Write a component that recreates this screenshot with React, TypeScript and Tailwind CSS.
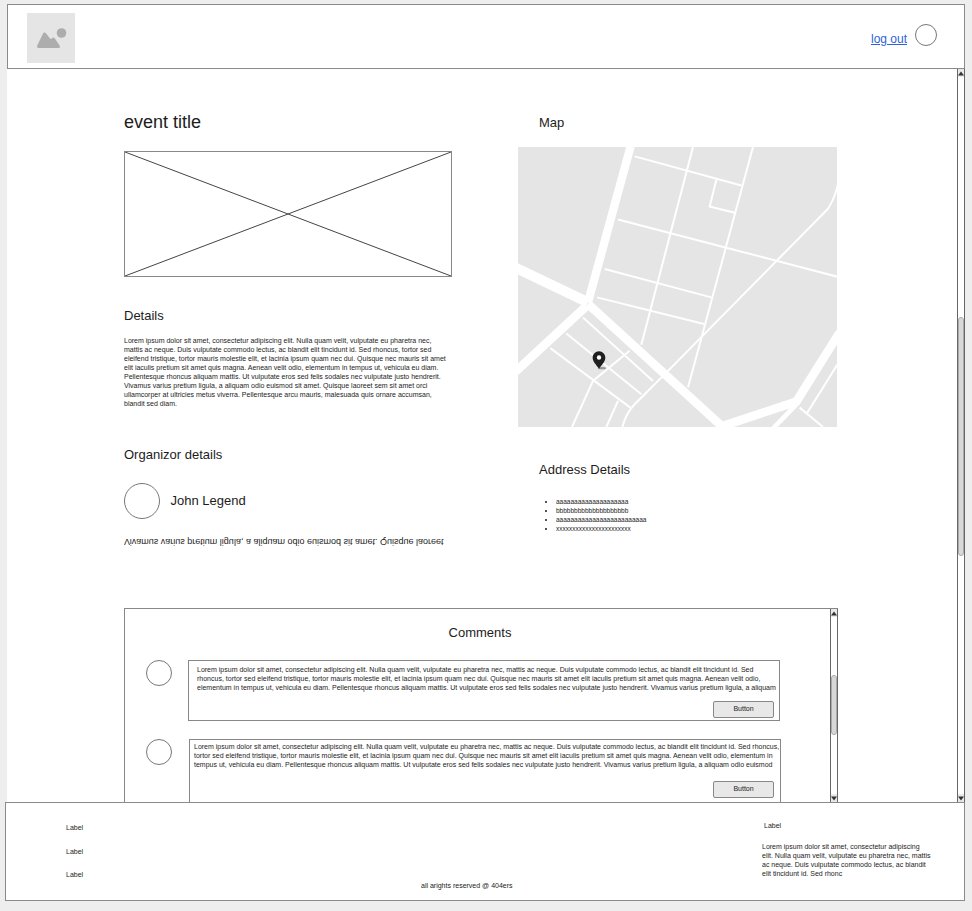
const lorem =
  "Lorem ipsum dolor sit amet, consectetur adipiscing elit. Nulla quam velit, vulputate eu pharetra nec, mattis ac neque. Duis vulputate commodo lectus, ac blandit elit tincidunt id. Sed rhoncus, tortor sed eleifend tristique, tortor mauris molestie elit, et lacinia ipsum quam nec dui. Quisque nec mauris sit amet elit iaculis pretium sit amet quis magna. Aenean velit odio, elementum in tempus ut, vehicula eu diam. Pellentesque rhoncus aliquam mattis. Ut vulputate eros sed felis sodales nec vulputate justo hendrerit. Vivamus varius pretium ligula, a aliquam odio euismod sit amet. Quisque laoreet sem sit amet orci ullamcorper at ultricies metus viverra. Pellentesque arcu mauris, malesuada quis ornare accumsan, blandit sed diam.";

const commentOne = lorem.slice(0, lorem.indexOf(" odio euismod"));
const commentTwo = lorem.slice(0, lorem.indexOf(" sit amet. Quisque laoreet"));

const thickRoads = [
  { d: "M365 10L235 485", w: 25 },
  { d: "M15 380L235 485", w: 30 },
  { d: "M235 490L650 868", w: 26 },
  { d: "M15 695L228 498", w: 26 },
  { d: "M640 855L860 782L990 575", w: 26 },
];

const thinRoads = [
  "M375 48L695 135",
  "M550 20L395 612",
  "M730 20L535 740",
  "M620 118L600 198L675 217",
  "M325 237L990 410",
  "M285 385L605 470",
  "M262 470L583 550",
  "M985 130Q975 175 955 205L475 690Q400 765 375 790Q350 815 338 858",
  "M220 530L430 720",
  "M170 578L395 760",
  "M122 622L362 800",
  "M360 630L250 720L187 858",
  "M325 780L290 858",
  "M990 660L893 815",
  "M870 800L940 858",
];

function ScrollArrow({ down }: { down?: boolean }) {
  return (
    <div className="h-2 w-full shrink-0 bg-[#e9e9e9] flex items-center justify-center">
      <svg width="6" height="5" viewBox="0 0 6 5">
        <path d={down ? "M0 0.5H6L3 4.5Z" : "M0 4.5H6L3 0.5Z"} fill="#333" />
      </svg>
    </div>
  );
}

function Scrollbar({ thumbTop, thumbHeight }: { thumbTop: string; thumbHeight: string }) {
  return (
    <div className="w-[6px] shrink-0 box-content border-x border-[#666] bg-white flex flex-col justify-between">
      <ScrollArrow />
      <div className={`${thumbTop} ${thumbHeight} mb-auto w-full rounded-[3px] bg-[#d8d8d8] border border-[#aaa]`} />
      <ScrollArrow down />
    </div>
  );
}

function Circle({ className }: { className: string }) {
  return <div className={`${className} shrink-0 rounded-full border border-[#777] bg-white`} />;
}

function MapPicture() {
  return (
    <svg className="block w-[319px] h-[280px]" viewBox="25 20 957 838" preserveAspectRatio="none">
      <rect x="25" y="20" width="957" height="838" fill="#e5e5e5" />
      {thickRoads.map((r) => (
        <path key={r.d} d={r.d} fill="none" stroke="#fff" strokeWidth={r.w} />
      ))}
      {thinRoads.map((d) => (
        <path key={d} d={d} fill="none" stroke="#fff" strokeWidth="6" />
      ))}
      <path d="M860 790L785 868" stroke="#fff" strokeWidth="14" />
      <ellipse cx="277" cy="682" rx="12" ry="3.5" fill="#9a9a9a" />
      <path
        d="M268 631C257 631 249 640 249 651C249 663 260 672 268 684C276 672 287 663 287 651C287 640 279 631 268 631Z"
        fill="#1f1f1f"
      />
      <circle cx="268" cy="650" r="6.5" fill="#fff" />
    </svg>
  );
}

export default function App() {
  return (
    <div className="w-[972px] h-[911px] overflow-hidden bg-[#eeeeee] pt-1 font-['Liberation_Sans',Arial,sans-serif] text-[#1c1c1c]">
      {/* Header */}
      <header className="ml-[7px] w-[958px] h-[65px] border border-[#8a8a8a] bg-white flex items-center justify-between pl-[19px] pr-[27px]">
        <div className="w-[48px] h-[50px] mt-[2px] bg-[#e5e5e5]">
          <svg width="48" height="50" viewBox="0 0 48 50">
            <circle cx="34.5" cy="20" r="4.8" fill="#adadad" />
            <path
              d="M17.5 21L11.5 33.5H31.5L26.5 26L23.5 28.5Z"
              fill="#adadad"
              stroke="#adadad"
              strokeWidth="3"
              strokeLinejoin="round"
            />
          </svg>
        </div>
        <div className="flex items-center gap-2 -mt-[3px]">
          <a href="#" className="text-[12px] leading-none mt-[7px] text-[#2c63d8] underline">
            log out
          </a>
          <Circle className="w-[22px] h-[22px]" />
        </div>
      </header>

      {/* Main scroll area */}
      <div className="ml-[7px] w-[958px] h-[733px] flex bg-white">
        <main className="flex-1 min-w-0 pl-[117px] overflow-hidden">
          <div className="flex gap-[66px] h-[539px]">
            {/* Left column */}
            <div className="w-[328px] pt-[43px]">
              <h1 className="text-[18px] leading-[20px] font-normal">event title</h1>
              <div className="mt-[19px] h-[126px] border border-[#888]">
                <svg className="block w-full h-full" viewBox="0 0 100 100" preserveAspectRatio="none">
                  <path d="M0 0L100 100M100 0L0 100" stroke="#444" strokeWidth="1" vectorEffect="non-scaling-stroke" />
                </svg>
              </div>
              <h2 className="mt-[31px] text-[13px] leading-[15px] font-normal">Details</h2>
              <p className="mt-[13px] w-[324px] text-[7px] leading-[9px]">{lorem}</p>
              <h2 className="mt-[39px] text-[13px] leading-[15px] font-normal">Organizor details</h2>
              <div className="mt-[21px] flex items-center gap-[10.5px]">
                <Circle className="w-[36px] h-[36px]" />
                <span className="text-[13px] leading-[15px] pb-[2px]">John Legend</span>
              </div>
              <p className="mt-[18px] -scale-y-100 text-[9px] leading-[10px] whitespace-nowrap">
                Vivamus varius pretium ligula, a aliquam odio euismod sit amet. Quisque laoreet
              </p>
            </div>

            {/* Right column */}
            <div className="w-[320px] pt-[46px]">
              <h2 className="ml-[21px] text-[13px] leading-[15px] font-normal">Map</h2>
              <div className="mt-[17px]">
                <MapPicture />
              </div>
              <h2 className="ml-[21px] mt-[35px] text-[13px] leading-[15px] font-normal">Address Details</h2>
              <ul className="ml-[38px] mt-[20px] list-disc list-outside text-[6.5px] leading-[9px]">
                <li>aaaaaaaaaaaaaaaaaaaa</li>
                <li>bbbbbbbbbbbbbbbbbbbb</li>
                <li>aaaaaaaaaaaaaaaaaaaaaaaaa</li>
                <li>xxxxxxxxxxxxxxxxxxxxxxx</li>
              </ul>
            </div>
          </div>

          {/* Comments */}
          <section className="w-[714px] h-[194px] border-l border-t border-[#888] flex overflow-hidden">
            <div className="flex-1 min-w-0 overflow-hidden">
              <h2 className="mt-[16px] pl-[5px] text-center text-[13px] leading-[15px] font-normal">Comments</h2>
              <div className="mt-[20px] ml-[21px] flex gap-[16px]">
                <Circle className="w-[26px] h-[26px]" />
                <div className="w-[592px] h-[61px] border border-[#888] flex flex-col pl-2 pt-[4px]">
                  <p className="text-[7px] leading-[9px]">{commentOne}</p>
                  <button className="mt-auto mb-[2px] mr-[5px] self-end w-[61px] h-[17px] rounded-[2px] border border-[#888] bg-[#e8e8e8] text-[7px]">
                    Button
                  </button>
                </div>
              </div>
              <div className="mt-[18px] ml-[21px] flex gap-[17px]">
                <Circle className="w-[26px] h-[26px]" />
                <div className="w-[592px] h-[70px] border border-[#888] flex flex-col pl-1 pt-[2px]">
                  <p className="text-[7px] leading-[9px]">{commentTwo}</p>
                  <button className="mt-[12px] mr-[6px] self-end w-[61px] h-[17px] rounded-[2px] border border-[#888] bg-[#e8e8e8] text-[7px]">
                    Button
                  </button>
                </div>
              </div>
            </div>
            <Scrollbar thumbTop="mt-[58px]" thumbHeight="h-[60px]" />
          </section>
        </main>
        <Scrollbar thumbTop="mt-[240px]" thumbHeight="h-[239px]" />
      </div>

      {/* Footer */}
      <footer className="ml-[5px] w-[960px] h-[99px] border border-[#8a8a8a] bg-white flex text-[7px] leading-[9px]">
        <div className="w-[415px] pl-[60px] pt-[20px] flex flex-col gap-[14.5px]">
          <span>Label</span>
          <span>Label</span>
          <span>Label</span>
        </div>
        <div className="w-[341px] pt-[78px]">all arights reserved @ 404ers</div>
        <div className="w-[170px] pt-[18px]">
          <span className="ml-[2px]">Label</span>
          <p className="mt-[12px]">
            Lorem ipsum dolor sit amet, consectetur adipiscing elit. Nulla quam velit, vulputate eu pharetra nec, mattis
            ac neque. Duis vulputate commodo lectus, ac blandit elit tincidunt id. Sed rhonc
          </p>
        </div>
      </footer>
    </div>
  );
}
